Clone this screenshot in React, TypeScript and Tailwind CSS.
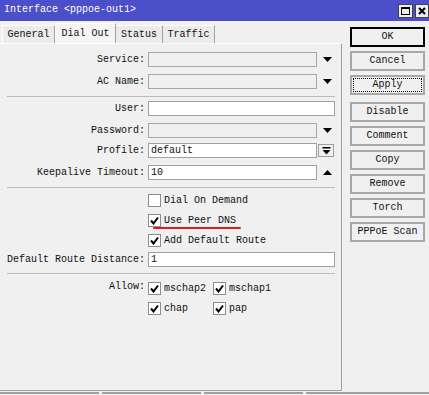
import React from "react";

const Arrow = ({ up = false }: { up?: boolean }) => (
  <svg width="9" height="5" viewBox="0 0 9 5" className="shrink-0">
    {up ? <polygon points="0,5 9,5 4.5,0" fill="#000" /> : <polygon points="0,0 9,0 4.5,5" fill="#000" />}
  </svg>
);

const Check = ({ checked }: { checked: boolean }) => (
  <div className="w-[13px] h-[13px] bg-white border border-[#8c8c8c] flex items-center justify-center shrink-0">
    {checked && (
      <svg width="9" height="9" viewBox="0 0 9 9">
        <path d="M1 4.5 L3.5 7.5 L8 1.5" stroke="#000" strokeWidth="2" fill="none" />
      </svg>
    )}
  </div>
);

const Label = ({ children }: { children: React.ReactNode }) => (
  <div className="w-[145px] text-right whitespace-pre leading-none shrink-0">{children}</div>
);

const Sep = ({ mt }: { mt: string }) => <div className={`${mt} ml-[7px] w-[328px] h-px bg-[#bcbcbc]`} />;

export default function App() {
  const buttons1 = ["OK", "Cancel", "Apply"];
  const buttons2 = ["Disable", "Comment", "Copy", "Remove", "Torch", "PPPoE Scan"];
  return (
    <div className="w-[429px] h-[395px] bg-[#f0f0f0] font-['Liberation_Mono',monospace] text-[10px] text-[#111] overflow-hidden">
      {/* Title bar */}
      <div className="h-[21px] bg-[#4b4fc9] flex items-start justify-between">
        <span className="text-white pl-[4px] pt-[5px] leading-none whitespace-pre">Interface &lt;pppoe-out1&gt;</span>
        <div className="flex gap-[2px] pt-[4px]">
          <div className="w-[15px] h-[14px] bg-[#ededed] border border-[#444] flex items-center justify-center">
            <div className="w-[9px] h-[8px] border border-black border-t-2" />
          </div>
          <div className="w-[14px] h-[14px] bg-[#ededed] border border-[#444] flex items-center justify-center">
            <svg width="8" height="8" viewBox="0 0 8 8">
              <path d="M1 1 L7 7 M7 1 L1 7" stroke="#000" strokeWidth="2" />
            </svg>
          </div>
        </div>
      </div>

      <div className="flex">
        {/* Left */}
        <div className="w-[342px] flex flex-col">
          <div className="h-[22px] flex items-end pl-[2px]">
            <div className="w-[53px] h-[18px] bg-[#ebebeb] border-t border-l border-white border-r border-r-[#a0a0a0] flex items-center justify-center leading-none">General</div>
            <div className="w-[61px] h-[20px] bg-[#f5f5f5] border-t border-l border-white border-r border-r-[#a0a0a0] flex items-center justify-center leading-none whitespace-pre">Dial Out</div>
            <div className="w-[47px] h-[18px] bg-[#ebebeb] border-t border-white border-r border-r-[#a0a0a0] flex items-center justify-center leading-none">Status</div>
            <div className="w-[52px] h-[18px] bg-[#ebebeb] border-t border-white border-r border-r-[#a0a0a0] flex items-center justify-center leading-none">Traffic</div>
          </div>
          <div className="h-[348px] border-t border-t-white border-r border-b border-[#a0a0a0] flex flex-col">
            {/* Service */}
            <div className="mt-[8px] h-[15px] flex items-center">
              <Label>Service:</Label>
              <div className="ml-[3px] w-[169px] h-[15px] border border-[#a8a8a8] bg-[#f0f0f0]" />
              <div className="ml-[6px]"><Arrow /></div>
            </div>
            <div className="mt-[7px] h-[15px] flex items-center">
              <Label>AC Name:</Label>
              <div className="ml-[3px] w-[169px] h-[15px] border border-[#a8a8a8] bg-[#f0f0f0]" />
              <div className="ml-[6px]"><Arrow /></div>
            </div>
            <Sep mt="mt-[7px]" />
            <div className="mt-[4px] h-[15px] flex items-center">
              <Label>User:</Label>
              <div className="ml-[3px] w-[187px] h-[15px] border border-[#a0a0a0] bg-white" />
            </div>
            <div className="mt-[7px] h-[15px] flex items-center">
              <Label>Password:</Label>
              <div className="ml-[3px] w-[169px] h-[15px] border border-[#a8a8a8] bg-[#f0f0f0]" />
              <div className="ml-[6px]"><Arrow /></div>
            </div>
            <div className="mt-[5px] h-[15px] flex items-center">
              <Label>Profile:</Label>
              <div className="ml-[3px] w-[169px] h-[15px] border border-[#a0a0a0] bg-white pl-[2px] flex items-center leading-none">default</div>
              <div className="ml-[1px] w-[16px] h-[13px] border border-[#a0a0a0] bg-[#f0f0f0] flex items-center justify-center">
                <svg width="9" height="8" viewBox="0 0 9 8">
                  <rect x="0.5" y="0" width="8" height="1.5" fill="#000" />
                  <polygon points="0.5,3 8.5,3 4.5,7.5" fill="#000" />
                </svg>
              </div>
            </div>
            <div className="mt-[7px] h-[15px] flex items-center">
              <Label>Keepalive Timeout:</Label>
              <div className="ml-[3px] w-[169px] h-[15px] border border-[#a0a0a0] bg-white pl-[2px] flex items-center leading-none">10</div>
              <div className="ml-[6px]"><Arrow up /></div>
            </div>
            <Sep mt="mt-[7px]" />
            <div className="mt-[6px] h-[13px] flex items-center pl-[148px]">
              <Check checked={false} />
              <span className="ml-[3px] leading-none whitespace-pre">Dial On Demand</span>
            </div>
            <div className="mt-[7px] h-[13px] flex items-center pl-[148px] relative">
              <Check checked />
              <span className="ml-[3px] leading-none whitespace-pre">Use Peer DNS</span>
              <div className="absolute left-[153px] top-[13px] w-[88px] h-[2px] bg-[#e11b1b] rounded-full" />
            </div>
            <div className="mt-[7px] h-[13px] flex items-center pl-[148px]">
              <Check checked />
              <span className="ml-[3px] leading-none whitespace-pre">Add Default Route</span>
            </div>
            <div className="mt-[5px] h-[15px] flex items-center">
              <Label>Default Route Distance:</Label>
              <div className="ml-[3px] w-[187px] h-[15px] border border-[#a0a0a0] bg-white pl-[2px] flex items-center leading-none">1</div>
            </div>
            <Sep mt="mt-[6px]" />
            <div className="mt-[8px] flex">
              <Label>Allow:</Label>
              <div className="ml-[3px] grid grid-cols-[65px_auto] gap-y-[7px]">
                {["mschap2", "mschap1", "chap", "pap"].map((t) => (
                  <div key={t} className="h-[13px] flex items-center">
                    <Check checked />
                    <span className="ml-[3px] leading-none">{t}</span>
                  </div>
                ))}
              </div>
            </div>
          </div>
        </div>

        {/* Right buttons */}
        <div className="ml-[8px] w-[75px] flex flex-col pt-[6px]">
          <div className="flex flex-col gap-[4px]">
            {buttons1.map((b) => (
              <div
                key={b}
                className={
                  b === "OK"
                    ? "h-[20px] border-2 border-black bg-[#f0f0f0] flex items-center justify-center leading-none"
                    : b === "Apply"
                    ? "h-[20px] border-2 border-[#a8a8a8] bg-[#f0f0f0] flex items-center justify-center leading-none outline outline-1 outline-dotted outline-black outline-offset-[-4px]"
                    : "h-[20px] border-2 border-[#a8a8a8] bg-[#f0f0f0] flex items-center justify-center leading-none"
                }
              >
                {b}
              </div>
            ))}
          </div>
          <div className="mt-[7px] flex flex-col gap-[4px]">
            {buttons2.map((b) => (
              <div key={b} className="h-[20px] border-2 border-[#a8a8a8] bg-[#f0f0f0] flex items-center justify-center leading-none whitespace-pre">
                {b}
              </div>
            ))}
          </div>
        </div>
      </div>

      {/* status bar */}
      <div className="mt-[1px] flex gap-[3px]">
        <div className="w-[99px] h-[3px] border-t-2 border-[#a0a0a0]" />
        <div className="w-[99px] h-[3px] border-t-2 border-[#a0a0a0]" />
        <div className="w-[99px] h-[3px] border-t-2 border-[#a0a0a0]" />
        <div className="flex-1 h-[3px] border-t-2 border-[#a0a0a0]" />
      </div>
    </div>
  );
}
